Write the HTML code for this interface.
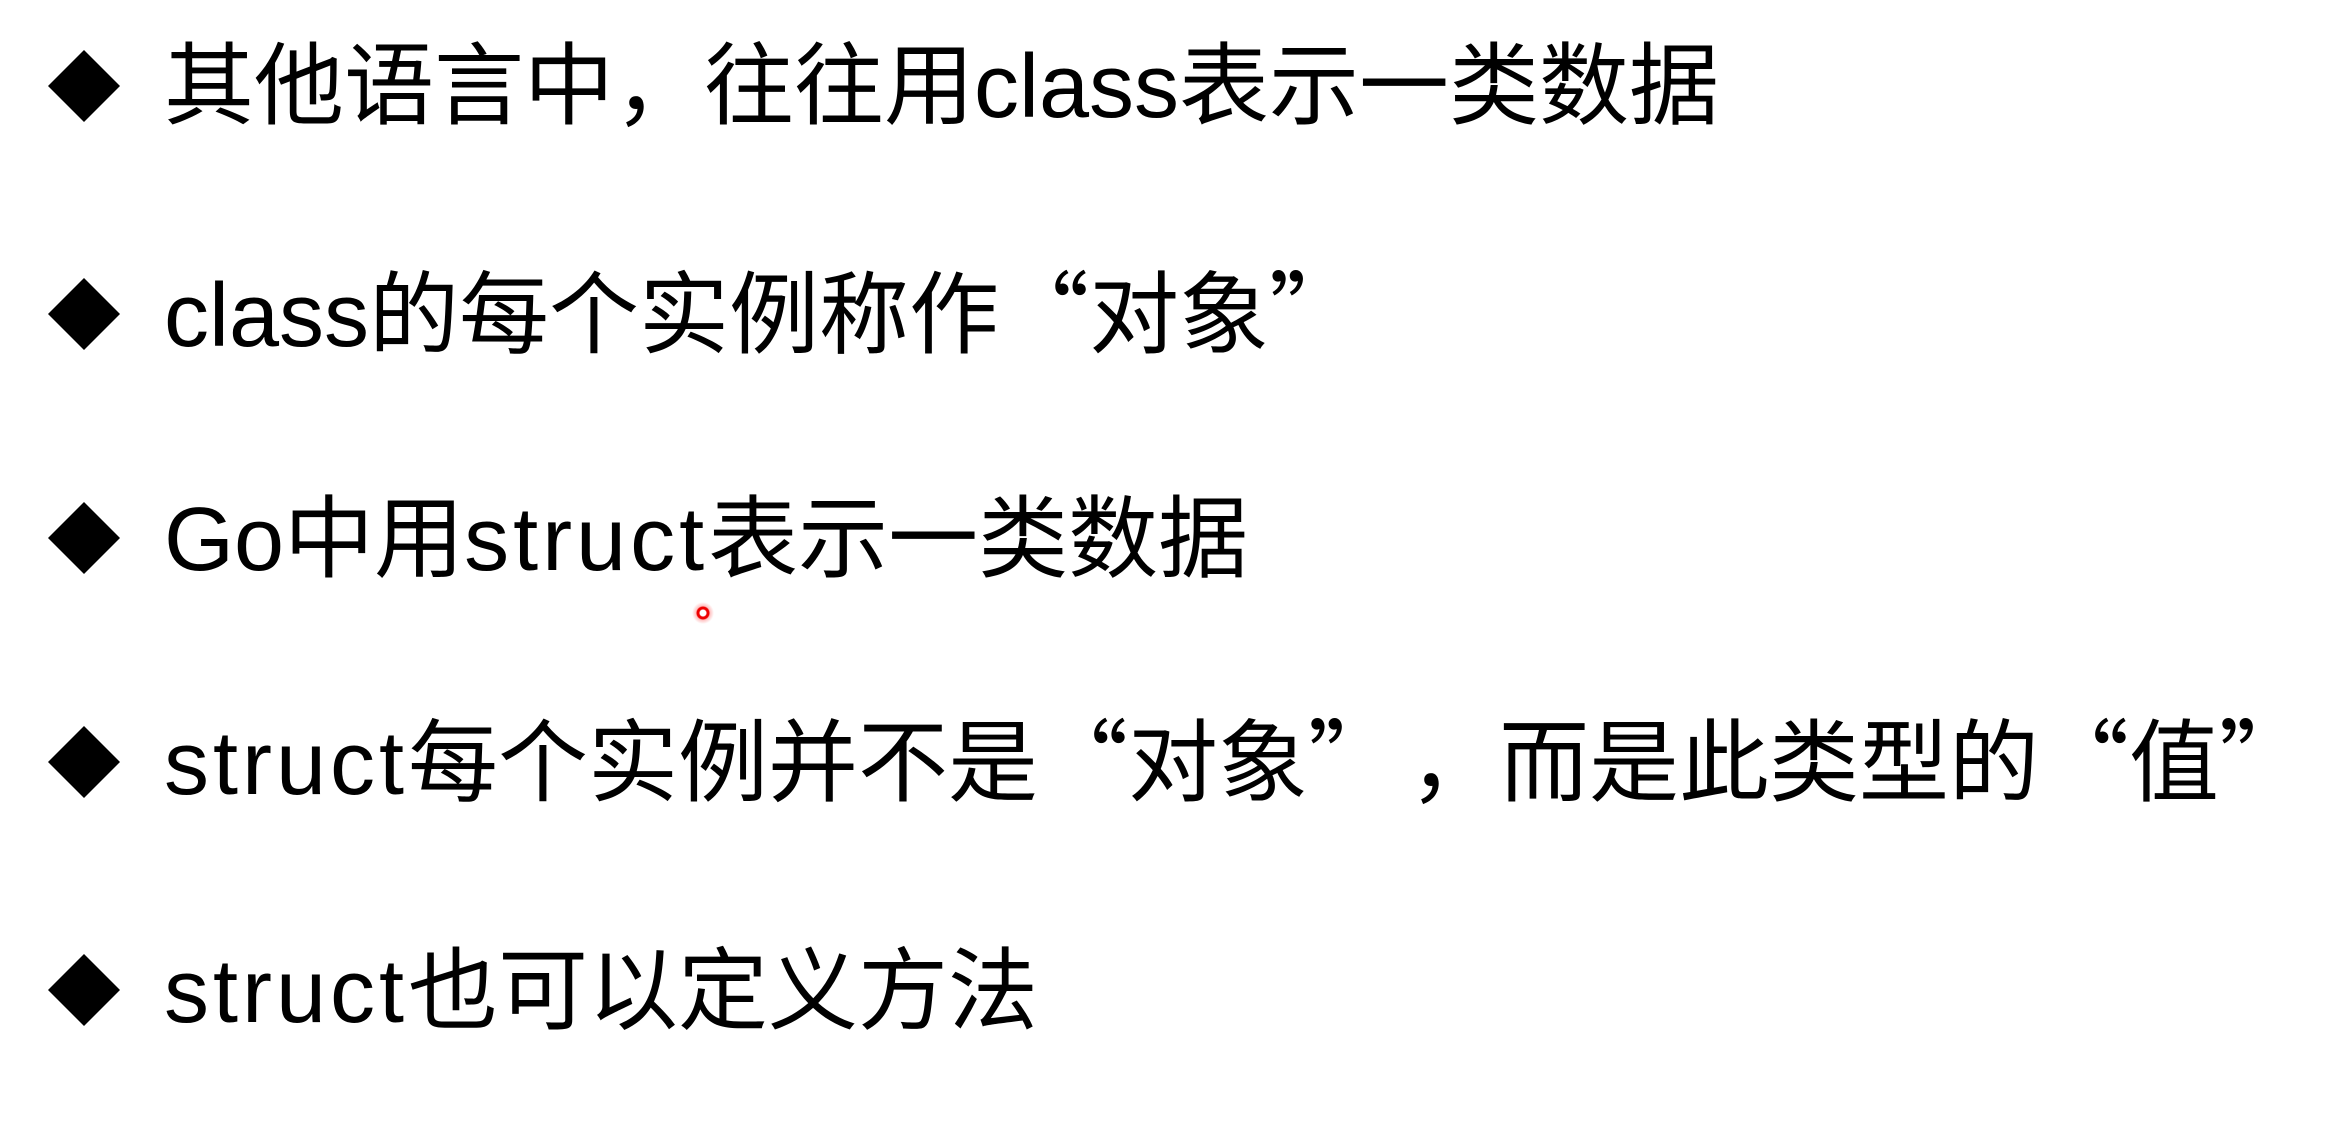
<!DOCTYPE html>
<html><head><meta charset="utf-8"><style>
html,body{margin:0;padding:0;background:#fff;width:2332px;height:1128px;overflow:hidden;position:relative}
.l{position:absolute;left:164px;height:90px;line-height:90px;font-size:90px;white-space:nowrap;color:#000;font-family:"Liberation Sans","Noto Sans CJK SC",sans-serif}
.q{font-family:"Noto Sans CJK SC",sans-serif;line-height:0}
.s{letter-spacing:4px}
.c{margin-left:56px}
.d{position:absolute;left:48px;width:72px;height:72px}
.dot{position:absolute;left:692px;top:602px;width:22px;height:22px;border-radius:50%;background:radial-gradient(circle,#fff 0 3px,#e00 4px 6px,rgba(255,80,80,.35) 7px,rgba(255,255,255,0) 11px)}
</style></head><body>
<svg class="d" style="top:50px" viewBox="0 0 72 72"><polygon points="36,0 72,36 36,72 0,36" fill="#000"/></svg>
<div class="l" style="top:42px">其他语言中，往往用class表示一类数据</div>
<svg class="d" style="top:278px" viewBox="0 0 72 72"><polygon points="36,0 72,36 36,72 0,36" fill="#000"/></svg>
<div class="l" style="top:271px">class的每个实例称作<span class="q">“</span>对象<span class="q">”</span></div>
<svg class="d" style="top:502px" viewBox="0 0 72 72"><polygon points="36,0 72,36 36,72 0,36" fill="#000"/></svg>
<div class="l" style="top:495px">Go中用<span class="s">struct</span>表示一类数据</div>
<svg class="d" style="top:726px" viewBox="0 0 72 72"><polygon points="36,0 72,36 36,72 0,36" fill="#000"/></svg>
<div class="l" style="top:719px"><span class="s">struct</span>每个实例并不是<span class="q">“</span>对象<span class="q">”</span><span class="c">，</span>而是此类型的<span class="q">“</span>值<span class="q">”</span></div>
<svg class="d" style="top:954px" viewBox="0 0 72 72"><polygon points="36,0 72,36 36,72 0,36" fill="#000"/></svg>
<div class="l" style="top:947px"><span class="s">struct</span>也可以定义方法</div>
<div class="dot"></div>
</body></html>
